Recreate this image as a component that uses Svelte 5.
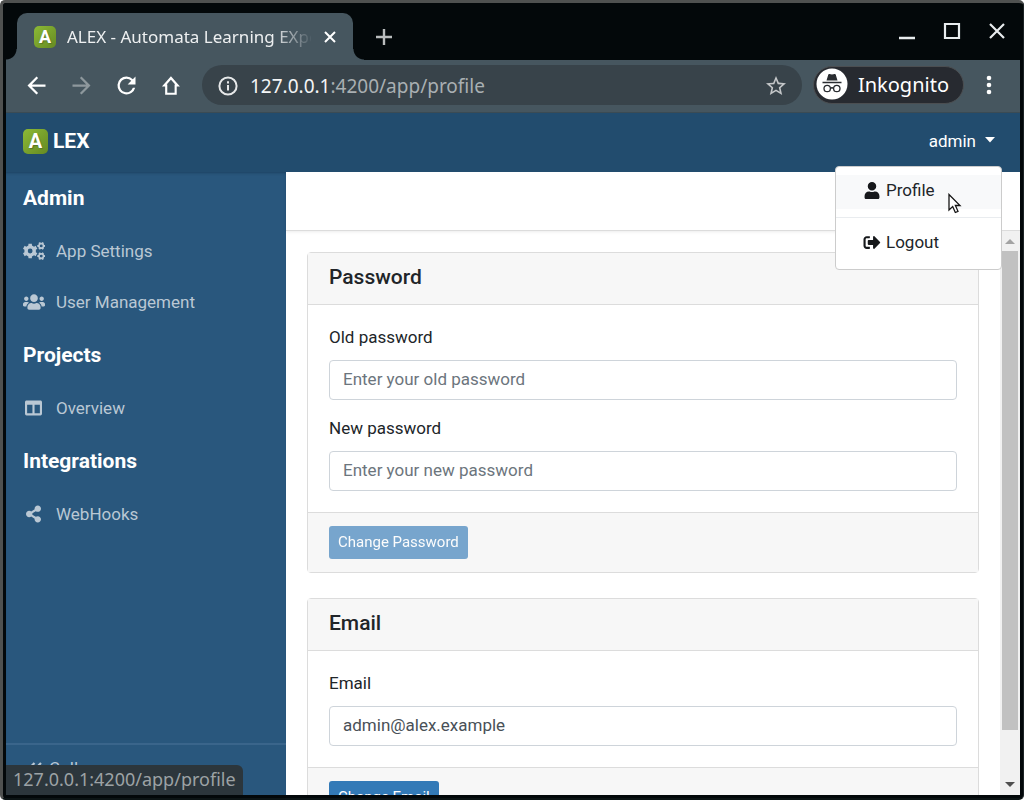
<script>
  const user = 'M224 256c70.7 0 128-57.3 128-128S294.7 0 224 0 96 57.3 96 128s57.3 128 128 128zm89.6 32h-16.7c-22.2 10.2-46.9 16-72.9 16s-50.6-5.8-72.9-16h-16.7C60.2 288 0 348.2 0 422.4V464c0 26.5 21.5 48 48 48h352c26.5 0 48-21.5 48-48v-41.6c0-74.2-60.2-134.4-134.4-134.4z';
  const signOut = 'M497 273L329 441c-15 15-41 4.5-41-17v-96H152c-13.3 0-24-10.7-24-24v-96c0-13.3 10.7-24 24-24h136V88c0-21.4 25.9-32 41-17l168 168c9.3 9.4 9.3 24.6 0 34zM192 436v-40c0-6.6-5.4-12-12-12H96c-17.7 0-32-14.3-32-32V160c0-17.7 14.3-32 32-32h84c6.6 0 12-5.4 12-12V76c0-6.6-5.4-12-12-12H96c-53 0-96 43-96 96v192c0 53 43 96 96 96h84c6.6 0 12-5.4 12-12z';
  const users = 'M96 224c35.3 0 64-28.7 64-64s-28.7-64-64-64-64 28.7-64 64 28.7 64 64 64zm448 0c35.3 0 64-28.7 64-64s-28.7-64-64-64-64 28.7-64 64 28.7 64 64 64zm32 32h-64c-17.6 0-33.5 7.1-45.1 18.6 40.3 22.1 68.9 62 75.1 109.4h66c17.7 0 32-14.3 32-32v-32c0-35.3-28.7-64-64-64zm-256 0c61.9 0 112-50.1 112-112S381.9 32 320 32 208 82.1 208 144s50.1 112 112 112zm76.8 32h-8.3c-20.8 10-43.9 16-68.5 16s-47.6-6-68.5-16h-8.3C179.6 288 128 339.6 128 403.2V432c0 26.5 21.5 48 48 48h288c26.5 0 48-21.5 48-48v-28.8c0-63.6-51.6-115.2-115.2-115.2zm-223.7-13.4C161.5 263.1 145.6 256 128 256H64c-35.3 0-64 28.7-64 64v32c0 17.7 14.3 32 32 32h65.9c6.3-47.4 34.9-87.3 75.2-109.4z';
  const columns = 'M464 32H48C21.49 32 0 53.49 0 80v352c0 26.51 21.49 48 48 48h416c26.51 0 48-21.49 48-48V80c0-26.51-21.49-48-48-48zM224 416H64V160h160v256zm224 0H288V160h160v256z';
  const share = 'M352 320c-22.608 0-43.387 7.819-59.79 20.895l-102.486-64.054a96.551 96.551 0 0 0 0-41.683l102.486-64.054C308.613 184.181 329.392 192 352 192c53.019 0 96-42.981 96-96S405.019 0 352 0s-96 42.981-96 96c0 7.158.79 14.13 2.276 20.841L155.79 180.895C139.387 167.819 118.608 160 96 160c-53.019 0-96 42.981-96 96s42.981 96 96 96c22.608 0 43.387-7.819 59.79-20.895l102.486 64.054A96.301 96.301 0 0 0 256 416c0 53.019 42.981 96 96 96s96-42.981 96-96-42.981-96-96-96z';

  // Toothed wheel: outer outline with flat teeth, then a round hole.
  function gear(cx, cy, r, teeth, hole, start) {
    const root = r * 0.78;
    const step = (Math.PI * 2) / teeth;
    const pts = [];
    for (let i = 0; i < teeth; i++) {
      const a = start + i * step;
      for (const [off, rad] of [[-0.3, root], [-0.22, r], [0.22, r], [0.3, root]]) {
        pts.push(`${cx + rad * Math.cos(a + off * step)} ${cy + rad * Math.sin(a + off * step)}`);
      }
    }
    return `M${pts.join('L')}ZM${cx - hole} ${cy}a${hole} ${hole} 0 1 0 ${hole * 2} 0a${hole} ${hole} 0 1 0 ${-hole * 2} 0Z`;
  }
  const cogs =
    gear(208, 256, 218, 6, 70, Math.PI / 6) + gear(530, 108, 118, 6, 42, 0) + gear(530, 404, 118, 6, 42, 0);

  const groups = [
    { title: 'Admin', items: [
      { label: 'App Settings', icon: cogs, box: '0 0 640 512', w: 22 },
      { label: 'User Management', icon: users, box: '0 0 640 512', w: 22 }
    ] },
    { title: 'Projects', items: [{ label: 'Overview', icon: columns, box: '0 0 512 512', w: 17 }] },
    { title: 'Integrations', items: [{ label: 'WebHooks', icon: share, box: '0 0 448 512', w: 15 }] }
  ];
  const address = '127.0.0.1:4200/app/profile';
  let email = $state('admin@alex.example');
</script>

<div class="window">
  <div class="tabs">
    <div class="tab">
      <span class="logo small">A</span>
      <span class="tab-title">ALEX - Automata Learning EXperience</span>
      <button class="plain" aria-label="Close tab">
        <svg width="14" height="14" viewBox="0 0 14 14"><path d="M2 2L12 12M12 2L2 12" stroke="#fff" stroke-width="2" /></svg>
      </button>
    </div>
    <button class="plain new" aria-label="New tab">
      <svg width="18" height="18" viewBox="0 0 18 18"><path d="M9 1V17M1 9H17" stroke="#b9bcbd" stroke-width="2.4" /></svg>
    </button>
    <div class="controls">
      <button class="plain" aria-label="Minimize"><svg width="18" height="18" viewBox="0 0 18 18"><path d="M1 16H17" stroke="#e8ecee" stroke-width="2.4" /></svg></button>
      <button class="plain" aria-label="Maximize"><svg width="18" height="18" viewBox="0 0 18 18"><path d="M2 2H16V16H2Z" fill="none" stroke="#e8ecee" stroke-width="2.2" /></svg></button>
      <button class="plain" aria-label="Close"><svg width="18" height="18" viewBox="0 0 18 18"><path d="M2 2L16 16M16 2L2 16" stroke="#e8ecee" stroke-width="2.2" /></svg></button>
    </div>
  </div>

  <div class="toolbar">
    <div class="nav">
      <button class="plain" aria-label="Back"><svg width="27" height="27" viewBox="0 0 24 24"><path fill="#fff" d="M20 11H7.830l5.590-5.590L12 4l-8 8 8 8 1.410-1.410L7.830 13H20v-2z" /></svg></button>
      <button class="plain" aria-label="Forward"><svg width="27" height="27" viewBox="0 0 24 24"><path fill="#8e989d" d="M12 4l-1.410 1.410L16.170 11H4v2h12.170l-5.580 5.590L12 20l8-8z" /></svg></button>
      <button class="plain" aria-label="Reload"><svg width="27" height="27" viewBox="0 0 24 24"><path fill="#fff" d="M17.650 6.350A7.960 7.960 0 0 0 12 4a8 8 0 1 0 7.730 10h-2.080A6 6 0 1 1 12 6c1.660 0 3.140.69 4.220 1.780L13 11h7V4l-2.350 2.350z" /></svg></button>
      <button class="plain" aria-label="Home"><svg width="27" height="27" viewBox="0 0 24 24"><path fill="none" stroke="#fff" stroke-width="1.900" d="M5.600 12H7.300V19.300H15.700V12H17.400L11.500 5.300Z" /></svg></button>
    </div>
    <div class="omnibox">
      <svg width="20" height="20" viewBox="0 0 20 20"><circle cx="10" cy="10" r="8.600" fill="none" stroke="#e6e8e9" stroke-width="2" /><path d="M10 9V14.500M10 5.300V7.500" stroke="#e6e8e9" stroke-width="2" /></svg>
      <span class="url"><b>127.0.0.1</b>:4200/app/profile</span>
      <button class="plain" aria-label="Bookmark"><svg width="24" height="24" viewBox="0 0 24 24"><path fill="#c3c6c8" d="M22 9.240l-7.190-.62L12 2 9.190 8.630 2 9.240l5.460 4.730L5.820 21 12 17.270 18.180 21l-1.630-7.030L22 9.240zM12 15.400l-3.760 2.270 1-4.280-3.320-2.880 4.380-.38L12 6.100l1.710 4.040 4.380.38-3.320 2.880 1 4.280L12 15.400z" /></svg></button>
    </div>
    <div class="incognito">
      <svg width="32" height="32" viewBox="0 0 32 32"><circle cx="16" cy="16" r="15.500" fill="#fff" /><path d="M10.500 12.500L12.300 6.500Q12.600 5.800 13.400 6L16 6.600 18.600 6Q19.400 5.800 19.700 6.500L21.500 12.500Z" fill="#292c31" /><path d="M6.500 14.500H25.500" stroke="#292c31" stroke-width="1.600" /><g fill="none" stroke="#292c31" stroke-width="1.300"><circle cx="11.200" cy="20.500" r="3.200" /><circle cx="20.800" cy="20.500" r="3.200" /><path d="M14.400 20.500Q16 19 17.600 20.500" /></g></svg>
      Inkognito
    </div>
    <button class="plain" aria-label="Menu"><svg width="8" height="20" viewBox="0 0 8 20" fill="#fff"><circle cx="4" cy="3" r="2.300" /><circle cx="4" cy="10" r="2.300" /><circle cx="4" cy="17" r="2.300" /></svg></button>
  </div>

  <div class="page">
    <header>
      <a class="brand" href="#home"><span class="logo">A</span>LEX</a>
      <div class="account">
        <button class="plain toggle">admin<svg width="10" height="10" viewBox="0 0 10 10"><path d="M0 1H10L5 6.500Z" fill="#fff" /></svg></button>
        <div class="menu">
          <a class="active" href="#profile"><svg width="18" height="17" viewBox="0 0 448 512"><path d={user} /></svg>Profile</a>
          <hr />
          <a href="#logout"><svg width="18" height="17" viewBox="0 0 512 512"><path d={signOut} /></svg>Logout</a>
          <svg class="pointer" width="14" height="21" viewBox="0 0 14 21"><path d="M1 1.500V17L4.700 13.600 7.300 19.500 10 18.300 7.400 12.500H12Z" fill="#fff" stroke="#151515" stroke-width="1.300" /></svg>
        </div>
      </div>
    </header>

    <div class="columns">
      <aside>
        <nav>
          {#each groups as group}
            <section>
              <h2>{group.title}</h2>
              {#each group.items as item}
                <a href="#item">
                  <span class="ico"><svg width={item.w} height="18" viewBox={item.box}><path fill-rule="evenodd" d={item.icon} /></svg></span>{item.label}
                </a>
              {/each}
            </section>
          {/each}
        </nav>
        <button class="plain collapse">
          <svg width="14" height="12" viewBox="0 0 14 12"><path d="M6.500 1L1.500 6 6.500 11M13 1L8 6 13 11" fill="none" stroke="currentColor" stroke-width="2.200" /></svg>Collapse
        </button>
      </aside>

      <main>
        <div class="subbar"></div>
        <div class="scroller">
          <div class="content">
            <form class="card">
              <h3>Password</h3>
              <div class="body">
                <label for="old">Old password</label>
                <input id="old" type="password" placeholder="Enter your old password" />
                <label for="new">New password</label>
                <input id="new" type="password" placeholder="Enter your new password" />
              </div>
              <div class="foot"><button class="primary" type="button" disabled>Change Password</button></div>
            </form>
            <form class="card">
              <h3>Email</h3>
              <div class="body">
                <label for="email">Email</label>
                <input id="email" type="email" bind:value={email} />
              </div>
              <div class="foot"><button class="primary" type="button">Change Email</button></div>
            </form>
          </div>
          <div class="track">
            <svg width="10" height="20" viewBox="0 0 10 20"><path d="M0 13L5 8 10 13Z" fill="#a3a3a3" /></svg>
            <div class="thumb"></div>
            <svg width="10" height="20" viewBox="0 0 10 20"><path d="M0 7L5 12 10 7Z" fill="#505050" /></svg>
          </div>
        </div>
      </main>
    </div>
    <div class="status">{address}</div>
  </div>
</div>

<style>
  :global(body) { margin: 0; background: #fff; }
  * { box-sizing: border-box; }
  svg { flex: none; display: block; }
  .plain { border: 0; padding: 0; background: none; color: inherit; font: inherit; display: flex; align-items: center; }
  .window {
    height: 100vh; display: flex; flex-direction: column; overflow: hidden;
    padding: 0 3px 3px;
    border: solid #4f5150; border-width: 3px 1px 2px 3px; border-right-color: #1b2224; border-bottom-color: #0c1415;
    border-radius: 5px; background: #03080a;
    font-family: "Noto Sans", sans-serif; color: #fff;
  }
  .tabs { flex: none; height: 57px; display: flex; align-items: center; padding: 10px 14px 0 11px; }
  .tab {
    position: relative; align-self: stretch; width: 336px; padding: 0 16px 0 17px; display: flex; align-items: center;
    background: #46565f; border-radius: 10px 10px 0 0; font-size: 17px;
  }
  .tab::before, .tab::after { content: ""; position: absolute; bottom: 0; width: 11px; height: 11px; }
  .tab::before { left: -11px; background: radial-gradient(circle at 0 0, #03080a 10px, #46565f 11px); }
  .tab::after { right: -11px; background: radial-gradient(circle at 100% 0, #03080a 10px, #46565f 11px); }
  .tab-title {
    flex: 1; margin: 0 12px 0 11px; overflow: hidden; white-space: nowrap; color: #eef0f1;
    mask-image: linear-gradient(to right, #000 205px, transparent 246px);
  }
  .new { margin-left: 22px; }
  .controls { margin-left: auto; display: flex; gap: 27px; padding-bottom: 12px; }
  .logo {
    width: 25px; height: 25px; border-radius: 5px; display: flex; align-items: center; justify-content: center;
    background: linear-gradient(135deg, #8cb936, #668a22); color: #fff;
    font: 700 20px/25px Roboto, sans-serif; text-shadow: 1px 1px 1px #5a7522;
  }
  .logo.small { width: 22px; height: 22px; font-size: 18px; line-height: 22px; }
  .toolbar {
    flex: none; height: 53px; display: flex; align-items: center; padding: 0 27px 2px 17px;
    background: #46565f; border-bottom: 1px solid #3b4b54;
  }
  .nav { display: flex; gap: 18px; margin-right: 17px; }
  .omnibox {
    flex: 1; height: 40px; padding: 2px 14px 0 16px; display: flex; align-items: center; gap: 12px;
    border-radius: 20px; background: #38434a; font-size: 19px; color: #a9afb2;
  }
  .url { flex: 1; }
  .url b { font-weight: 400; color: #f4f5f6; }
  .incognito {
    height: 38px; margin: 0 21px 0 11px; padding: 0 14px 2px 2px; display: flex; align-items: center; gap: 10px;
    border: 1px solid #4b4e51; border-radius: 19px; background: #272a30; font-size: 20px;
  }
  .page {
    position: relative; flex: 1; min-height: 0; display: flex; flex-direction: column; overflow: hidden;
    background: #fff; color: #212529; font: 17px/26px Roboto, sans-serif;
  }
  header {
    position: relative; z-index: 2; flex: none; height: 59px; padding: 0 25px 3px 17px;
    display: flex; align-items: center; justify-content: space-between; background: #224c6e; color: #fff;
  }
  .brand { display: flex; align-items: center; gap: 5px; color: #fff; text-decoration: none; font-size: 21px; font-weight: 700; }
  .account { position: relative; }
  .toggle { gap: 9px; cursor: pointer; }
  .menu {
    position: absolute; top: 38px; right: -7px; width: 167px; padding: 8px 0;
    background: #fff; border: 1px solid #ccc; border-radius: 4px;
  }
  .menu a { display: flex; align-items: center; gap: 5px; height: 34px; padding: 0 27px 4px; color: #212529; text-decoration: none; }
  .menu .active { background: #f8f9fa; }
  .menu svg { fill: #16181b; }
  hr { margin: 8px 0 9px; border: 0; border-top: 1px solid #e9ecef; }
  .pointer { position: absolute; left: 112px; top: 26px; }
  .columns { flex: 1; min-height: 0; display: flex; }
  aside {
    width: 280px; display: flex; flex-direction: column; justify-content: space-between;
    background: #29577d; color: #bac8d4; box-shadow: inset 0 3px 3px -2px #1d4261;
  }
  section { padding-bottom: 2px; }
  h2 { margin: 0; padding: 0 17px; font-size: 21px; line-height: 53px; font-weight: 700; color: #fff; }
  nav a { display: flex; align-items: center; height: 51px; padding: 0 17px; color: inherit; text-decoration: none; }
  .ico { width: 21px; margin-right: 12px; display: flex; justify-content: center; fill: #bac8d4; }
  .collapse { height: 52px; padding: 0 22px 4px; gap: 7px; border-top: 2px solid #3a658b; }
  main { flex: 1; min-width: 0; display: flex; flex-direction: column; }
  .subbar { flex: none; height: 59px; border-bottom: 1px solid #dcdcdc; box-shadow: 0 1px 3px #00000014; }
  .scroller { flex: 1; min-height: 0; display: flex; }
  .content { flex: 1; padding: 21px; display: flex; flex-direction: column; gap: 25px; overflow: hidden; }
  .card { flex: none; border: 1px solid #dcdcdc; border-radius: 4px; }
  h3 { margin: 0; height: 52px; padding: 0 21px 2px; font-size: 21px; line-height: 49px; font-weight: 500; background: #f7f7f7; border-bottom: 1px solid #dcdcdc; }
  .body { padding: 19px 21px 21px; display: flex; flex-direction: column; }
  label { line-height: 26px; margin-bottom: 10px; }
  input {
    height: 40px; width: 100%; padding: 0 13px 2px; border: 1px solid #ced4da; border-radius: 4px;
    background: #fff; color: #495057; font: inherit;
  }
  input::placeholder { color: #6c757d; opacity: 1; }
  input + label { margin-top: 15px; }
  .foot { padding: 13px 21px; background: #f7f7f7; border-top: 1px solid #dcdcdc; }
  .primary {
    display: block; height: 33px; padding: 0 9px; border: 0; border-radius: 3px;
    background: #337ab7; color: #fff; font: 15px/33px Roboto, sans-serif;
  }
  .primary:disabled { opacity: 0.65; }
  .track { width: 20px; display: flex; flex-direction: column; align-items: center; background: #f1f1f1; }
  .thumb { width: 16px; height: 85%; margin-bottom: auto; background: #c1c1c1; }
  .status {
    position: absolute; z-index: 3; left: 0; bottom: 0; padding: 0 7px 2px 7px; border-radius: 0 6px 0 0;
    background: #2c363c; color: #9ca2a5; font: 18px/28px "Noto Sans", sans-serif;
  }
</style>
